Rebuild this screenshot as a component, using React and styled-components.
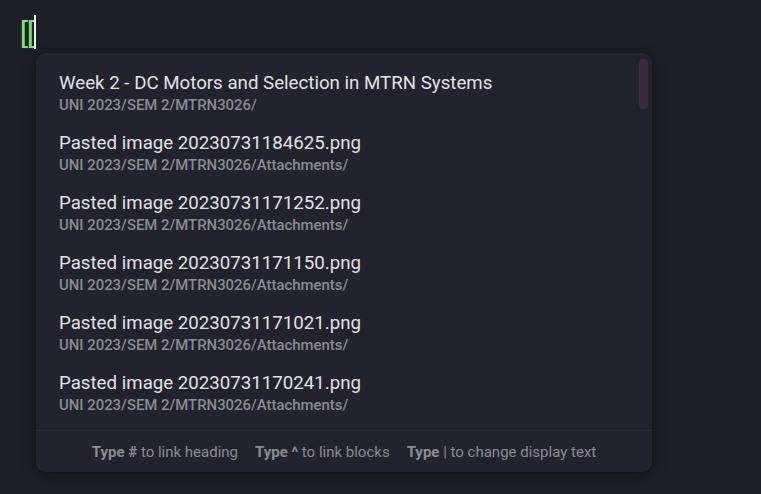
import React from "react";
import styled, { createGlobalStyle } from "styled-components";

const GlobalStyle = createGlobalStyle`
    html, body {
        margin: 0;
        padding: 0;
        background: #1e1e26;
        font-family: Roboto, "Noto Sans", sans-serif;
    }
`;

const Page = styled.div`
    width: 761px;
    height: 494px;
    overflow: hidden;
    background: #1e1e26;
`;

const EditorLine = styled.div`
    display: flex;
    align-items: center;
    height: 34px;
    padding: 15px 0 0 20px;
`;

const Brackets = styled.span`
    font-family: "Liberation Sans", Arial, sans-serif;
    font-size: 29px;
    line-height: 34px;
    color: #7ee37e;
    letter-spacing: -1px;
    text-shadow: 0 0 1px #3f8f3f;
`;

const Caret = styled.span`
    display: inline-block;
    width: 1.5px;
    height: 34px;
    margin-left: 0;
    background: #f2f2f2;
`;

const Popup = styled.div`
    position: relative;
    width: 616px;
    height: 419px;
    margin: 4px 0 0 36px;
    background: #23232e;
    border-radius: 9px;
    box-shadow: 0 4px 14px rgba(0, 0, 0, 0.35), 0 0 0 1px rgba(0, 0, 0, 0.12);
    display: flex;
    flex-direction: column;
    overflow: hidden;
`;

const List = styled.div`
    flex: 1;
    overflow: hidden;
    padding-top: 10px;
`;

const Thumb = styled.div`
    position: absolute;
    top: 6px;
    right: 4px;
    width: 9px;
    height: 50px;
    border-radius: 5px;
    background: #3a2b3f;
`;

const Item = styled.div`
    display: flex;
    flex-direction: column;
    padding: 8px 23px;
`;

const Title = styled.div`
    font-size: 18.7px;
    line-height: 24px;
    color: #e2e2e4;
    white-space: nowrap;
`;

const Path = styled.div`
    font-size: 14.9px;
    line-height: 20px;
    font-weight: 500;
    color: #8b8b90;
    white-space: nowrap;
`;

const Footer = styled.div`
    height: 41px;
    flex-shrink: 0;
    border-top: 1px solid #2c2c37;
    display: flex;
    align-items: center;
    justify-content: center;
    gap: 17px;
    font-size: 15px;
    color: #8b8b90;
`;

const Hint = styled.span`
    white-space: nowrap;
    b {
        font-weight: 700;
    }
`;

const items = [
    { title: "Week 2 - DC Motors and Selection in MTRN Systems", path: "UNI 2023/SEM 2/MTRN3026/" },
    { title: "Pasted image 20230731184625.png", path: "UNI 2023/SEM 2/MTRN3026/Attachments/" },
    { title: "Pasted image 20230731171252.png", path: "UNI 2023/SEM 2/MTRN3026/Attachments/" },
    { title: "Pasted image 20230731171150.png", path: "UNI 2023/SEM 2/MTRN3026/Attachments/" },
    { title: "Pasted image 20230731171021.png", path: "UNI 2023/SEM 2/MTRN3026/Attachments/" },
    { title: "Pasted image 20230731170241.png", path: "UNI 2023/SEM 2/MTRN3026/Attachments/" },
    { title: "Pasted image 20230731165903.png", path: "UNI 2023/SEM 2/MTRN3026/Attachments/" },
];

const App = () => {
    return (
        <Page>
            <GlobalStyle />
            <EditorLine>
                <Brackets>[[</Brackets>
                <Caret />
            </EditorLine>
            <Popup>
                <List>
                    {items.map((item, index) => (
                        <Item key={index}>
                            <Title>{item.title}</Title>
                            <Path>{item.path}</Path>
                        </Item>
                    ))}
                </List>
                <Thumb />
                <Footer>
                    <Hint><b>Type #</b> to link heading</Hint>
                    <Hint><b>Type ^</b> to link blocks</Hint>
                    <Hint><b>Type</b> | to change display text</Hint>
                </Footer>
            </Popup>
        </Page>
    );
};

export default App;
